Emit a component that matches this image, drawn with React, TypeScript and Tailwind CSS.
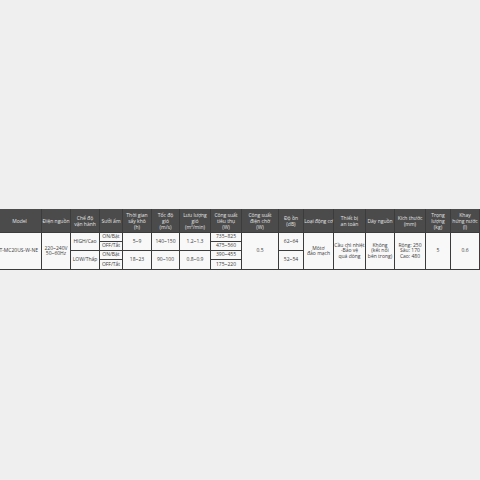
import React from "react";

type CellProps = {
  children?: React.ReactNode;
  className?: string;
};

const Head = ({ children, className = "" }: CellProps) => (
  <div
    className={`flex items-center justify-center text-center bg-[#4b4b4b] text-[#e4e4e4] text-[5px] leading-[6px] ${className}`}
  >
    <div>{children}</div>
  </div>
);

const Cell = ({ children, className = "" }: CellProps) => (
  <div
    className={`flex items-center justify-center text-center bg-[#f8f8f8] text-[#3a3a3a] text-[5px] leading-[5.5px] whitespace-nowrap ${className}`}
  >
    <div>{children}</div>
  </div>
);

const App = () => {
  return (
    <div
      className="w-[480px] h-[480px] overflow-hidden bg-[#efefef] pt-[209px]"
      style={{ fontFamily: '"Open Sans", "Noto Sans", sans-serif' }}
    >
      <div className="ml-[-2px] w-max grid grid-cols-[43px_28px_28px_22px_28px_27px_30px_30px_36px_24px_29px_31px_28px_30px_24px_28px_30px] grid-rows-[23px_8px_8px_8px_9px] gap-px bg-[#3c3c3c] pb-px">
        <Head>Model</Head>
        <Head>Điện nguồn</Head>
        <Head>
          Chế độ
          <br />
          vận hành
        </Head>
        <Head>Sưởi ấm</Head>
        <Head>
          Thời gian
          <br />
          sấy khô
          <br />
          (h)
        </Head>
        <Head>
          Tốc độ
          <br />
          gió
          <br />
          (m/s)
        </Head>
        <Head>
          Lưu lượng
          <br />
          gió
          <br />
          (m³/min)
        </Head>
        <Head>
          Công suất
          <br />
          tiêu thụ
          <br />
          (W)
        </Head>
        <Head>
          Công suất
          <br />
          điện chờ
          <br />
          (W)
        </Head>
        <Head>
          Độ ồn
          <br />
          (dB)
        </Head>
        <Head className="whitespace-nowrap tracking-[-0.1px]">Loại động cơ</Head>
        <Head>
          Thiết bị
          <br />
          an toàn
        </Head>
        <Head className="whitespace-nowrap">Dây nguồn</Head>
        <Head>
          Kích thước
          <br />
          (mm)
        </Head>
        <Head>
          Trọng
          <br />
          lượng
          <br />
          (kg)
        </Head>
        <Head className="whitespace-nowrap">
          Khay
          <br />
          hứng nước
          <br />
          (l)
        </Head>
        <Head />

        {/* row 1 */}
        <Cell className="row-span-4 justify-end pr-[3px]">JT-MC20US-W-NE</Cell>
        <Cell className="row-span-4">
          220~240V
          <br />
          50~60Hz
        </Cell>
        <Cell className="row-span-2">HIGH/Cao</Cell>
        <Cell>ON/Bật</Cell>
        <Cell className="row-span-2">5~9</Cell>
        <Cell className="row-span-2">140~150</Cell>
        <Cell className="row-span-2">1.2~1.3</Cell>
        <Cell>735~825</Cell>
        <Cell className="row-span-4">0.5</Cell>
        <Cell className="row-span-2">62~64</Cell>
        <Cell className="row-span-4">
          Môtơ
          <br />
          đảo mạch
        </Cell>
        <Cell className="row-span-4">
          Cầu chì nhiệt
          <br />
          -Bảo vệ
          <br />
          quá dòng
        </Cell>
        <Cell className="row-span-4">
          Không
          <br />
          (kết nối
          <br />
          bên trong)
        </Cell>
        <Cell className="row-span-4">
          Rộng: 250
          <br />
          Sâu: 170
          <br />
          Cao: 480
        </Cell>
        <Cell className="row-span-4">5</Cell>
        <Cell className="row-span-4">0.6</Cell>
        <Cell className="row-span-4" />

        {/* row 2 */}
        <Cell>OFF/Tắt</Cell>
        <Cell>475~560</Cell>

        {/* row 3 */}
        <Cell className="row-span-2">LOW/Thấp</Cell>
        <Cell>ON/Bật</Cell>
        <Cell className="row-span-2">18~23</Cell>
        <Cell className="row-span-2">90~100</Cell>
        <Cell className="row-span-2">0.8~0.9</Cell>
        <Cell>390~455</Cell>
        <Cell className="row-span-2">52~54</Cell>

        {/* row 4 */}
        <Cell>OFF/Tắt</Cell>
        <Cell>175~220</Cell>
      </div>
    </div>
  );
};

export default App;
